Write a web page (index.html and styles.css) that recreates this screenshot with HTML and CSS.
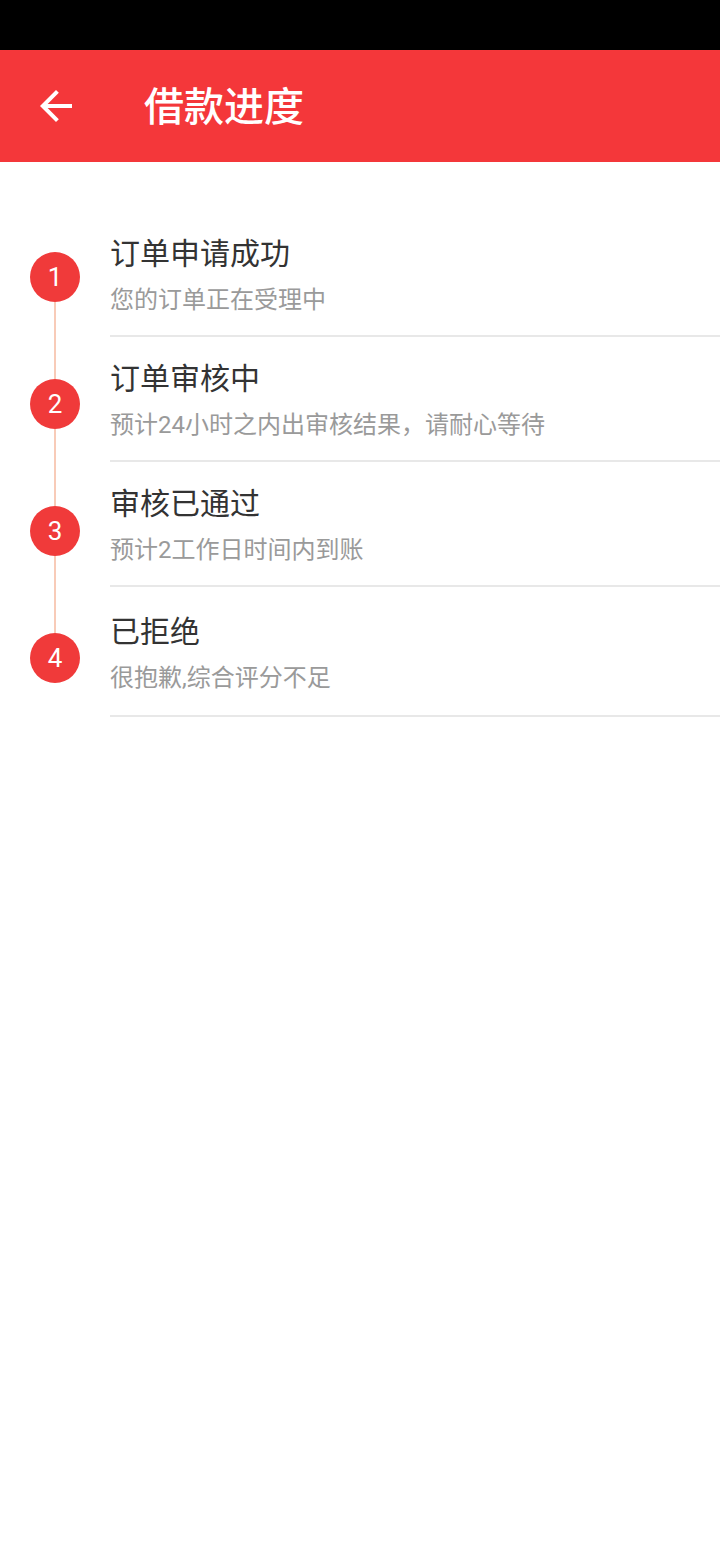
FILE: index.html
```html
<!DOCTYPE html>
<html lang="zh-CN">
<head>
<meta charset="utf-8">
<title>借款进度</title>
<link rel="stylesheet" href="styles.css">
</head>
<body>
<div class="status-bar"></div>
<header class="toolbar">
  <svg class="back" viewBox="0 0 24 24" width="48" height="48" aria-hidden="true">
    <path d="M20 11H7.83l5.59-5.59L12 4l-8 8 8 8 1.41-1.41L7.83 13H20v-2z" fill="#fff"/>
  </svg>
  <h1 class="title">借款进度</h1>
</header>
<main class="progress">
  <div class="timeline">
    <div class="dot">1</div>
    <div class="link"></div>
    <div class="dot">2</div>
    <div class="link"></div>
    <div class="dot">3</div>
    <div class="link"></div>
    <div class="dot">4</div>
  </div>
  <ul class="steps">
    <li class="step">
      <div class="step-title">订单申请成功</div>
      <div class="step-desc">您的订单正在受理中</div>
    </li>
    <li class="step">
      <div class="step-title">订单审核中</div>
      <div class="step-desc">预计24小时之内出审核结果，请耐心等待</div>
    </li>
    <li class="step">
      <div class="step-title">审核已通过</div>
      <div class="step-desc">预计2工作日时间内到账</div>
    </li>
    <li class="step step-last">
      <div class="step-title">已拒绝</div>
      <div class="step-desc">很抱歉,综合评分不足</div>
    </li>
  </ul>
</main>
</body>
</html>
```

FILE: styles.css
```css
html, body {
  margin: 0;
  padding: 0;
  background: #ffffff;
}

body {
  width: 720px;
  min-height: 1560px;
  font-family: Roboto, "Noto Sans CJK SC", sans-serif;
}

.status-bar {
  height: 50px;
  background: #000000;
}

.toolbar {
  height: 112px;
  background: #f4373a;
  display: flex;
  align-items: center;
  padding-left: 32px;
}

.back {
  display: block;
  flex: none;
}

.title {
  margin: 0 0 0 64px;
  padding-top: 4px;
  color: #ffffff;
  font-size: 40px;
  font-weight: 500;
  line-height: 48px;
  font-family: Roboto, "Noto Sans CJK SC", sans-serif;
}

.progress {
  display: flex;
  align-items: flex-start;
}

.timeline {
  width: 110px;
  flex: none;
  display: flex;
  flex-direction: column;
  align-items: center;
  padding-top: 90px;
}

.dot {
  width: 50px;
  height: 50px;
  border-radius: 50%;
  background: #f03a3a;
  color: #ffffff;
  font-family: Roboto, sans-serif;
  font-size: 26px;
  line-height: 50px;
  text-align: center;
}

.link {
  width: 2px;
  height: 77px;
  background: #f8cbb8;
}

.steps {
  flex: 1;
  list-style: none;
  margin: 0;
  padding: 50px 0 0 0;
}

.step {
  padding: 24px 0 20px 0;
  border-bottom: 2px solid #e8e8e8;
}

.step-last {
  padding-top: 27px;
  padding-bottom: 22px;
}

.step-title {
  font-size: 30px;
  line-height: 36px;
  color: #333333;
}

.step-desc {
  margin-top: 13px;
  font-size: 24px;
  line-height: 30px;
  color: #9a9a9a;
}
```
